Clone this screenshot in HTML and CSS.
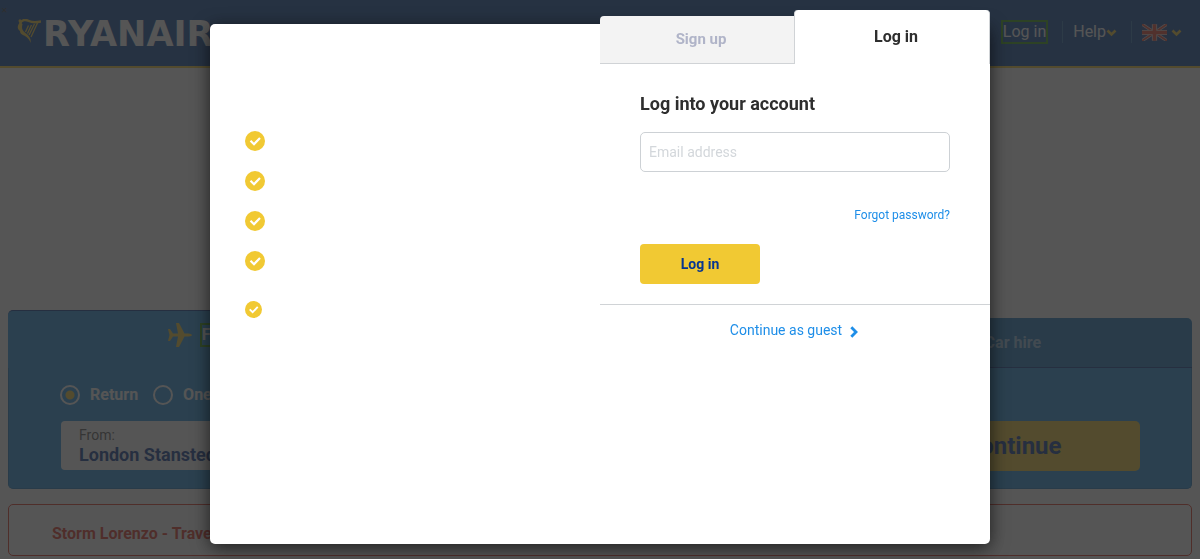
FILE: index.html
```html
<!DOCTYPE html>
<html lang="en">
<head>
<meta charset="utf-8">
<title>Ryanair</title>
<link rel="stylesheet" href="styles.css">
</head>
<body>
<svg class="defs" aria-hidden="true">
  <symbol id="check" viewBox="0 0 20 20"><circle cx="10" cy="10" r="10" fill="#f1c933"/><path d="M5.500 9.800L9 13.200L15 7" fill="none" stroke="#fff" stroke-width="2.200"/></symbol>
  <symbol id="down" viewBox="0 0 10 8"><path d="M1 1.500L5 5.500L9 1.500" fill="none" stroke="#f1c933" stroke-width="2.600"/></symbol>
</svg>

<header class="header">
  <button class="dismiss" aria-label="Close">✕</button>
  <a class="logo" href="#">
    <svg class="harp" viewBox="0 0 24 24" fill="none" stroke="#f1c933" aria-hidden="true">
      <circle cx="3" cy="1.800" r="1.500" fill="#f1c933" stroke="none"/>
      <path d="M3 4.500C5 0 9 .500 12 2S19 3.500 24 2.500" stroke-width="2.400"/>
      <path d="M3 3C0 7 0 10 3 12C3 15 6 16 8 17C11 19 13 21 13.500 24C14.500 20 12 16.500 8.500 14C5 11.500 4.500 9 5.500 5Z" fill="#f1c933" stroke="none"/>
      <path d="M20.500 4L14 18M17.500 5L12 16M14.500 6L10.500 14.500M11.500 6.500L8.500 13" stroke-width="1.300"/>
    </svg>
    <span class="wordmark">RYANAIR</span>
  </a>
  <nav class="nav">
    <a class="nav-login marked" href="#">Log in</a>
    <a class="nav-item" href="#">Help<svg class="down" aria-hidden="true"><use href="#down"/></svg></a>
    <a class="nav-item nav-lang" href="#" aria-label="Language">
      <svg class="flag" viewBox="0 0 24 16" aria-hidden="true">
        <path d="M0 0H24V16H0Z" fill="#24418c"/>
        <path d="M0 0L24 16M24 0L0 16" stroke="#ddd" stroke-width="3"/>
        <path d="M0 0L24 16M24 0L0 16" stroke="#e8402e" stroke-width="1.600"/>
        <path d="M12 0V16M0 8H24" stroke="#ddd" stroke-width="5"/>
        <path d="M12 0V16M0 8H24" stroke="#e8402e" stroke-width="3.400"/>
      </svg>
      <svg class="down" aria-hidden="true"><use href="#down"/></svg>
    </a>
  </nav>
</header>

<main class="page">
  <section class="search">
    <div class="products">
      <button class="product active">
        <svg class="product-icon" viewBox="0 0 24 26" aria-hidden="true"><path d="M0 7H2L5 11.500H10L8 1H11L16.500 11.500H21Q24 12 24 13Q24 14 21 14.500H16.500L11 25H8L10 14.500H5L2 19H0L1.500 13Z" fill="#f1c933"/></svg>
        <span class="marked">Flights</span>
      </button>
      <button class="product">
        <svg class="product-icon" viewBox="0 0 24 26" aria-hidden="true"><path d="M2 6V21M2 17H22V21M2 13H22V17M6 9H12V13" fill="none" stroke="#9cc6e8" stroke-width="2"/></svg>
        <span>Hotels</span>
      </button>
      <button class="product">
        <svg class="product-icon" viewBox="0 0 24 26" aria-hidden="true"><path d="M2 19V13L5 6H19L22 13V19Z" fill="#9cc6e8"/></svg>
        <span>Car hire</span>
      </button>
    </div>
    <form class="trip">
      <div class="trip-types">
        <label class="trip-type"><input type="radio" name="trip" checked>Return</label>
        <label class="trip-type"><input type="radio" name="trip">One way</label>
      </div>
      <div class="trip-row">
        <label class="airport"><span class="airport-label">From:</span><input class="airport-input" value="London Stansted"></label>
        <button class="continue" type="button">Continue</button>
      </div>
    </form>
  </section>
  <section class="alert">Storm Lorenzo - Travel</section>
</main>

<div class="overlay">
  <div class="dialog" role="dialog" aria-label="Log in">
    <ul class="benefits">
      <li><svg class="check"><use href="#check"/></svg></li>
      <li><svg class="check"><use href="#check"/></svg></li>
      <li><svg class="check"><use href="#check"/></svg></li>
      <li><svg class="check"><use href="#check"/></svg></li>
      <li class="last"><svg class="check small"><use href="#check"/></svg></li>
    </ul>
    <div class="account">
      <div class="tabs" role="tablist">
        <button class="tab" role="tab">Sign up</button>
        <button class="tab selected" role="tab" aria-selected="true">Log in</button>
      </div>
      <form class="login">
        <h2 class="title">Log into your account</h2>
        <input class="email" type="email" placeholder="Email address" aria-label="Email address">
        <a class="forgot" href="#">Forgot password?</a>
        <button class="submit" type="button">Log in</button>
      </form>
      <a class="guest" href="#">Continue as guest
        <svg class="next" viewBox="0 0 8 12" aria-hidden="true"><path d="M1.300 1.300L6 6L1.300 10.700" fill="none" stroke="#1e8ee8" stroke-width="2.800"/></svg>
      </a>
    </div>
  </div>
</div>
</body>
</html>
```
FILE: styles.css
```css
* { box-sizing: border-box; }
html, body { height: 100%; overflow: hidden; }
body { margin: 0; background: #fff; font: 16px/24px Roboto, sans-serif; color: #2e2e2e; }
button, input { font: inherit; color: inherit; border: 0; padding: 0; margin: 0; background: none; }
a { color: inherit; text-decoration: none; }
.defs { position: absolute; width: 0; height: 0; }

.header { position: relative; display: flex; justify-content: space-between; align-items: center; height: 68px; padding: 0 18px 2px 17px; background: #0a4699; border-bottom: 2px solid #f1c933; color: #fff; }
.dismiss { position: absolute; left: 1px; top: 3px; font-size: 8px; line-height: 16px; color: #333; }
.logo { display: flex; align-items: center; gap: 2px; }
.harp { width: 24px; height: 24px; margin-bottom: 2px; }
.wordmark { padding-top: 3px; font: bold 35px/40px "DejaVu Sans", sans-serif; }
.nav { display: flex; align-items: center; }
.nav-login { margin-right: 14px; }
.marked { border: 2px solid #2e9900; line-height: 20px; }
.nav-item { display: flex; align-items: center; height: 22px; padding: 0 14px 0 10px; border-left: 1px solid #2b78b5; }
.nav-lang { gap: 4px; padding-right: 0; }
.flag { width: 25px; height: 17px; }
.down { width: 11px; height: 8px; margin-top: 2px; }

.page { padding: 242px 8px 0; }
.search { color: #fff; }
.products { display: flex; align-items: flex-end; }
.product { flex: 1; display: flex; align-items: center; justify-content: center; gap: 8px; height: 50px; padding-left: 3px; background: #1676be; color: #9cc6e8; font-weight: 700; border-bottom: 1px solid #073590; }
.product:last-child { border-radius: 5px 5px 0 0; }
.product.active { height: 58px; padding: 0 0 9px 7px; color: #fff; background: #2092df; border-top: 1px solid #073590; border-bottom: 0; border-radius: 5px 0 0 0; }
.product-icon { width: 24px; height: 26px; }
.trip { padding: 15px 51px 17px 52px; background: #2092df; border: solid #1676be; border-width: 0 1px 1px; border-radius: 0 0 5px 5px; }
.trip-types { display: flex; gap: 15px; margin-left: -1px; }
.trip-type { display: flex; align-items: center; gap: 10px; font-weight: 700; }
.trip-type input { appearance: none; width: 20px; height: 20px; border: 2px solid #fff; border-radius: 50%; }
.trip-type input:checked { background: radial-gradient(circle, #f1c933 4px, transparent 5px); }
.trip-row { display: flex; justify-content: space-between; margin-top: 14px; }
.airport { width: 300px; height: 49px; padding: 4px 18px; background: #fff; border-radius: 4px; }
.airport-label { display: block; font-size: 14px; line-height: 20px; color: #555; }
.airport-input { display: block; width: 100%; height: 20px; font-size: 18px; font-weight: 700; line-height: 20px; color: #073590; }
.continue { width: 258px; height: 50px; padding-left: 4px; border-radius: 5px; background: #f1c933; color: #073590; font-size: 24px; font-weight: 700; }
.alert { margin-top: 15px; padding: 17px 43px 9px; border: 1px solid #e0301e; border-radius: 5px; color: #e0301e; font-weight: 700; }

.overlay { position: fixed; inset: 0; padding-top: 24px; background: rgba(45, 45, 45, .81); }
.dialog { display: grid; grid-template-columns: 1fr 1fr; width: 65%; height: 520px; margin: 0 auto; background: #fff; border-radius: 5px; box-shadow: 0 4px 18px rgba(0, 0, 0, .65); }
.benefits { list-style: none; margin: 0; padding: 107px 35px 0; }
.benefits li { display: flex; height: 40px; }
.check { width: 20px; height: 20px; }
.benefits .last { margin-top: 10px; }
.check.small { width: 17px; height: 17px; }
.account { margin-top: -14px; }
.tabs { display: flex; align-items: flex-end; }
.tab { flex: 1; height: 48px; padding: 0 0 1px 8px; background: #f3f3f3; border: solid #d0d3d6; border-width: 0 0 1px; border-radius: 4px 0 0 0; color: #b0b4c8; font-size: 15px; font-weight: 700; }
.tab.selected { height: 54px; padding-bottom: 0; background: #fff; border-width: 0 1px; border-radius: 4px 4px 0 0; color: #2e2e2e; font-size: 16px; }
.login { display: flex; flex-direction: column; padding: 28px 40px 20px; border-bottom: 1px solid #d0d3d6; }
.title { margin: 0 0 16px; font-size: 18px; line-height: 24px; }
.email { height: 40px; padding: 0 8px; border: 1px solid #cdd1d5; border-radius: 5px; font-size: 14px; }
.email::placeholder { color: #d3d7db; }
.forgot { align-self: flex-end; margin: 35px 0 21px; font-size: 12px; line-height: 16px; color: #1e8ee8; }
.submit { width: 120px; height: 40px; border-radius: 4px; background: #f1c933; color: #073590; font-size: 14px; font-weight: 700; }
.guest { display: flex; align-items: center; justify-content: center; gap: 8px; padding: 13px 2px 0 0; font-size: 14px; color: #1e8ee8; }
.next { width: 8px; height: 12px; margin-top: 3px; }
```
